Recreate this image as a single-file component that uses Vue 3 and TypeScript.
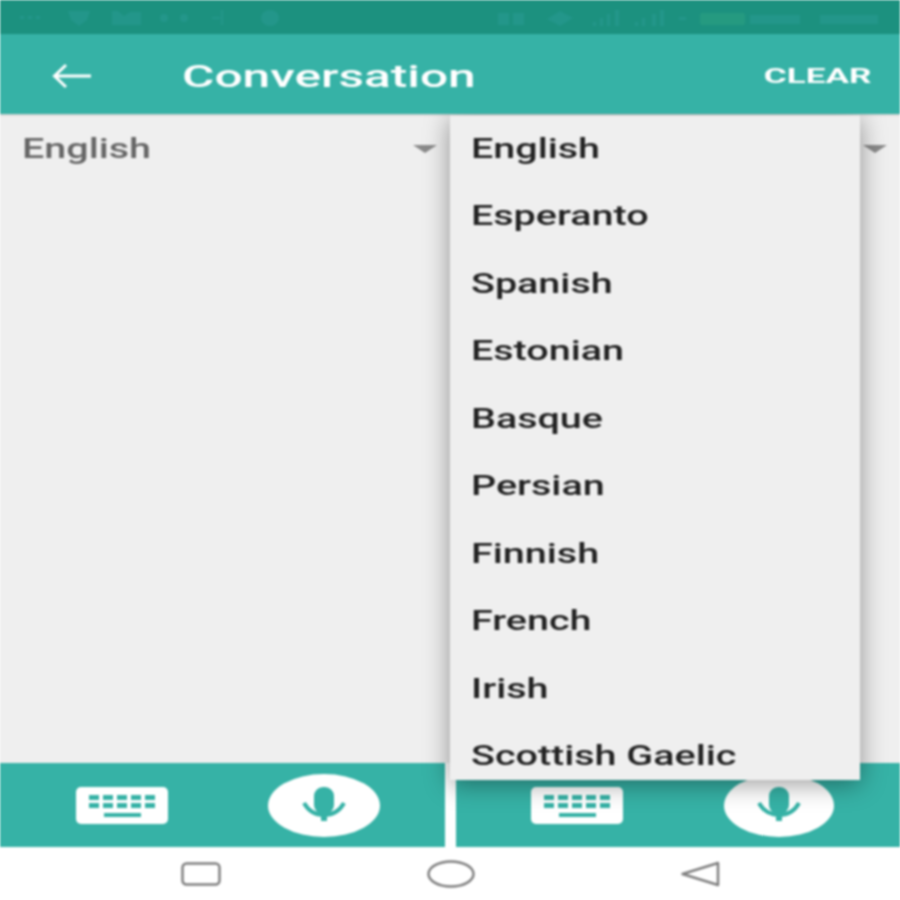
<script setup lang="ts">
const languages: string[] = [
  'English',
  'Esperanto',
  'Spanish',
  'Estonian',
  'Basque',
  'Persian',
  'Finnish',
  'French',
  'Irish',
  'Scottish Gaelic'
]
</script>

<template>
  <div class="phone">
    <div class="status">
      <svg class="status__left" width="300" height="34" viewBox="0 0 300 34">
        <g fill="#23968a">
          <rect x="20" y="16" width="4" height="3" />
          <rect x="28" y="16" width="4" height="3" />
          <rect x="36" y="16" width="4" height="3" />
          <path d="M68 11h22l-3 9-8 6-8-6z" />
          <path d="M112 11h6l6 5 6-4 11 0v13h-29z" />
          <circle cx="164" cy="18" r="4" />
          <circle cx="184" cy="18" r="4" />
          <rect x="221" y="10" width="2" height="15" />
          <rect x="212" y="17" width="8" height="2" />
          <path d="M270 10a9 8 0 1 1 0 16 9 8 0 1 1 0-16z" />
        </g>
      </svg>
      <svg class="status__right" width="420" height="34" viewBox="0 0 420 34">
        <g fill="#23968a">
          <rect x="18" y="13" width="11" height="12" />
          <rect x="33" y="13" width="11" height="12" />
          <path d="M67 19l13-8 13 7-13 8z" />
          <path d="M113 26h3v-4h-3zM120 26h3v-8h-3zM127 26h3v-12h-3zM135 26h4v-16h-4z" />
          <path d="M155 26h3v-4h-3zM162 26h3v-8h-3zM172 26h4v-12h-4zM180 26h4v-16h-4z" />
          <rect x="199" y="17" width="7" height="3" />
        </g>
        <rect x="220" y="13" width="45" height="12" rx="2" fill="#259a80" />
        <g fill="#23968a">
          <rect x="270" y="15" width="50" height="9" />
          <rect x="340" y="15" width="58" height="9" />
        </g>
      </svg>
    </div>

    <header class="toolbar">
      <svg class="toolbar__back" width="40" height="26" viewBox="0 0 40 26">
        <path d="M39 13H3M14 2 2.5 13 14 24" fill="none" stroke="#fff" stroke-width="3" />
      </svg>
      <span class="toolbar__title">Conversation</span>
      <span class="toolbar__clear">CLEAR</span>
    </header>

    <main class="content">
      <section class="spinner">
        <span class="wide spinner__label">English</span>
        <span class="spinner__arrow" />
      </section>
      <section class="spinner">
        <span class="spinner__arrow" />
      </section>
    </main>

    <div class="actions">
      <div v-for="side in ['left', 'right']" :key="side" class="actions__side" :class="`actions__side--${side}`">
        <svg class="keyboard" width="92" height="37" viewBox="0 0 92 37">
          <rect width="92" height="37" rx="5" fill="#fff" />
          <g fill="#36b2a6">
            <rect v-for="n in 5" :key="`a${n}`" :x="13 + (n - 1) * 14" y="8" width="10" height="5" />
            <rect v-for="n in 5" :key="`b${n}`" :x="13 + (n - 1) * 14" y="16" width="10" height="5" />
            <rect x="28" y="26" width="37" height="4" />
          </g>
        </svg>
        <div class="mic">
          <svg width="46" height="36" viewBox="0 0 46 36">
            <rect x="13" y="0" width="20" height="27" rx="9" fill="#36b2a6" />
            <path d="M3 16c5 9 13 12 20 12s15-3 20-12" fill="none" stroke="#36b2a6" stroke-width="4" />
            <rect x="20" y="27" width="6" height="7" fill="#36b2a6" />
          </svg>
        </div>
      </div>
    </div>

    <nav class="nav">
      <svg width="40" height="24" viewBox="0 0 40 24">
        <rect x="1.5" y="1.5" width="37" height="21" rx="4" fill="none" stroke="#808080" stroke-width="2.5" />
      </svg>
      <svg width="48" height="28" viewBox="0 0 48 28">
        <ellipse cx="24" cy="14" rx="22.5" ry="12.5" fill="none" stroke="#808080" stroke-width="2.5" />
      </svg>
      <svg width="40" height="26" viewBox="0 0 40 26">
        <path d="M2.5 13 38 2v22z" fill="none" stroke="#808080" stroke-width="2.5" stroke-linejoin="round" />
      </svg>
    </nav>

    <ul class="menu">
      <li v-for="lang in languages" :key="lang" class="menu__item">
        <span class="wide">{{ lang }}</span>
      </li>
    </ul>
  </div>
</template>

<style scoped>
.phone {
  position: relative;
  width: 900px;
  height: 900px;
  display: flex;
  flex-direction: column;
  overflow: hidden;
  background: #fff;
  font-family: Roboto, "Liberation Sans", sans-serif;
  filter: blur(0.8px);
}

.status {
  height: 34px;
  flex: none;
  display: flex;
  justify-content: space-between;
  background: #1c917f;
}

.toolbar {
  box-sizing: border-box;
  height: 80px;
  flex: none;
  display: flex;
  align-items: center;
  padding: 4px 29px 0 52px;
  background: #36b2a6;
  color: #fff;
  box-shadow: 0 1px 2px rgba(0, 0, 0, 0.2);
  z-index: 1;
}

.toolbar__back {
  flex: none;
}

.toolbar__title {
  margin-left: 90px;
  font-size: 31px;
  font-weight: 500;
  transform: scaleX(1.6);
  transform-origin: left center;
}

.toolbar__clear {
  margin-left: auto;
  font-size: 21px;
  font-weight: 700;
  transform: scaleX(1.67);
  transform-origin: right center;
}

.content {
  flex: 1;
  display: grid;
  grid-template-columns: 445px 444px;
  column-gap: 11px;
  background: #efefef;
}

.spinner {
  display: flex;
  justify-content: space-between;
  align-items: flex-start;
  padding: 18px 8px 0 22px;
}

.spinner:last-child {
  justify-content: flex-end;
  padding-right: 13px;
}

.spinner__label {
  color: #666;
}

.spinner__arrow {
  width: 0;
  height: 0;
  margin-top: 13px;
  border-left: 12px solid transparent;
  border-right: 12px solid transparent;
  border-top: 8px solid #8a8a8a;
}

.wide {
  display: inline-block;
  font-size: 28px;
  font-weight: 500;
  line-height: 34px;
  white-space: nowrap;
  transform: scaleX(1.41);
  transform-origin: left center;
}

.actions {
  height: 84px;
  flex: none;
  display: grid;
  grid-template-columns: 445px 444px;
  column-gap: 11px;
}

.actions__side {
  display: flex;
  align-items: center;
  background: #36b2a6;
}

.actions__side--left {
  padding-left: 76px;
  gap: 100px;
}

.actions__side--right {
  padding-left: 75px;
  gap: 101px;
}

.actions__side--right .mic {
  width: 110px;
}

.keyboard {
  flex: none;
}

.mic {
  width: 112px;
  height: 63px;
  flex: none;
  display: flex;
  align-items: center;
  justify-content: center;
  border-radius: 50%;
  background: #fff;
}

.nav {
  height: 53px;
  flex: none;
  display: flex;
  align-items: center;
  padding: 0 180px 0 181px;
  justify-content: space-between;
}

.menu {
  position: absolute;
  left: 450px;
  top: 115px;
  width: 410px;
  height: 665px;
  margin: 0;
  padding: 0;
  list-style: none;
  overflow: hidden;
  background: #efefef;
  color: #222;
  box-shadow: 0 4px 24px rgba(0, 0, 0, 0.4);
}

.menu__item {
  height: 67.5px;
  display: flex;
  align-items: center;
  padding-left: 21px;
}
</style>

<style>
body {
  margin: 0;
}
</style>
